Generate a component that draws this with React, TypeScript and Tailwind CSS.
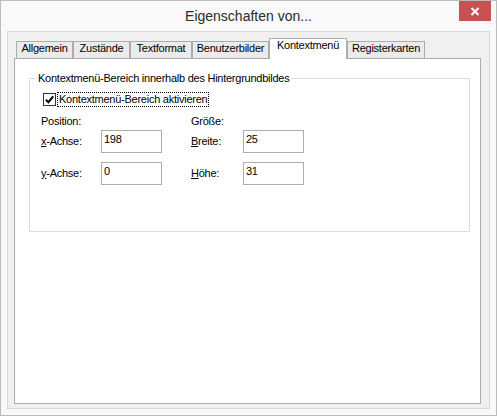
import React from 'react';

const tabs = [
  { label: 'Allgemein', w: 'w-[57px]' },
  { label: 'Zustände', w: 'w-[57px]' },
  { label: 'Textformat', w: 'w-[62px]' },
  { label: 'Benutzerbilder', w: 'w-[77px]' },
  { label: 'Kontextmenü', w: 'w-[78px]', active: true },
  { label: 'Registerkarten', w: 'w-[78px]' },
];

function Field({ hot, rest, value, labelW }: { hot: string; rest: string; value: string; labelW: string }) {
  return (
    <div className="flex items-start">
      <span className={`mt-[5px] ${labelW} leading-[13px]`}>
        <span className="underline">{hot}</span>
        {rest}
      </span>
      <div className="h-[23px] w-[61px] border border-[#acacac] bg-white pl-[2px] pt-[2px] leading-[13px]">
        {value}
      </div>
    </div>
  );
}

export default function App() {
  return (
    <div className="flex h-[416px] w-[497px] flex-col border border-[#bcbcbc] bg-[#f9f9f9] font-['Liberation_Sans',Arial,sans-serif] text-[11px] tracking-[-0.25px] text-black">
      {/* title bar */}
      <div className="grid h-[30px] grid-cols-[1fr_auto_1fr]">
        <div />
        <div className="self-center pt-[1px] text-[14px] tracking-normal text-[#2b2b2b]">Eigenschaften von...</div>
        <div className="flex justify-end">
          <button type="button" className="mr-[5px] flex h-[20px] w-[32px] items-center justify-center bg-[#c75050]">
            <svg width="10" height="9" viewBox="0 0 10 9">
              <path d="M1.5 1 L8.5 8 M8.5 1 L1.5 8" stroke="#fff" strokeWidth="2" fill="none" />
            </svg>
          </button>
        </div>
      </div>

      {/* dialog body */}
      <div className="mx-[6px] mb-[6px] flex flex-1 flex-col border border-[#d9d9d9] bg-[#f0f0f0] pb-[4px] pl-[6px] pr-[8px] pt-[6px]">
        <div className="flex h-[20px] items-end pl-[2px]">
          {tabs.map((t) =>
            t.active ? (
              <div
                key={t.label}
                className={`relative z-10 -mb-px flex h-[21px] ${t.w} justify-center border border-b-0 border-[#acacac] bg-white leading-[13px]`}
              >
                {t.label}
              </div>
            ) : (
              <div
                key={t.label}
                className={`flex h-[17px] ${t.w} justify-center border border-b-0 border-[#acacac] bg-[#ebebeb] leading-[13px]`}
              >
                {t.label}
              </div>
            ),
          )}
        </div>

        <div className="flex-1 border border-[#acacac] bg-white pl-[14px] pr-[10px]">
          <fieldset className="mt-[13px] border border-[#dcdcdc] pb-[46px] pl-[11px]">
            <legend className="-ml-[6px] px-[3px] leading-[13px]">
              Kontextmenü-Bereich innerhalb des Hintergrundbildes
            </legend>

            <div className="mt-[7px] flex h-[15px] items-center">
              <span className="ml-[2px] flex h-[13px] w-[13px] items-center justify-center border border-[#333] bg-white">
                <svg width="9" height="9" viewBox="0 0 9 9">
                  <path d="M0.8 4.6 L3.4 7.2 L8.2 1.4" stroke="#000" strokeWidth="2" fill="none" />
                </svg>
              </span>
              <span className="ml-px border border-dotted border-black px-[1px] leading-[13px]">
                Kontextmenü-Bereich aktivieren
              </span>
            </div>

            <div className="mt-[8px] flex">
              <div className="flex w-[150px] flex-col">
                <span className="leading-[13px]">Position:</span>
                <div className="mt-[2px]">
                  <Field hot="x" rest="-Achse:" value="198" labelW="w-[60px]" />
                </div>
                <div className="mt-[9px]">
                  <Field hot="y" rest="-Achse:" value="0" labelW="w-[60px]" />
                </div>
              </div>
              <div className="flex flex-col">
                <span className="leading-[13px]">Größe:</span>
                <div className="mt-[2px]">
                  <Field hot="B" rest="reite:" value="25" labelW="w-[52px]" />
                </div>
                <div className="mt-[9px]">
                  <Field hot="H" rest="öhe:" value="31" labelW="w-[52px]" />
                </div>
              </div>
            </div>
          </fieldset>
        </div>
      </div>
    </div>
  );
}
